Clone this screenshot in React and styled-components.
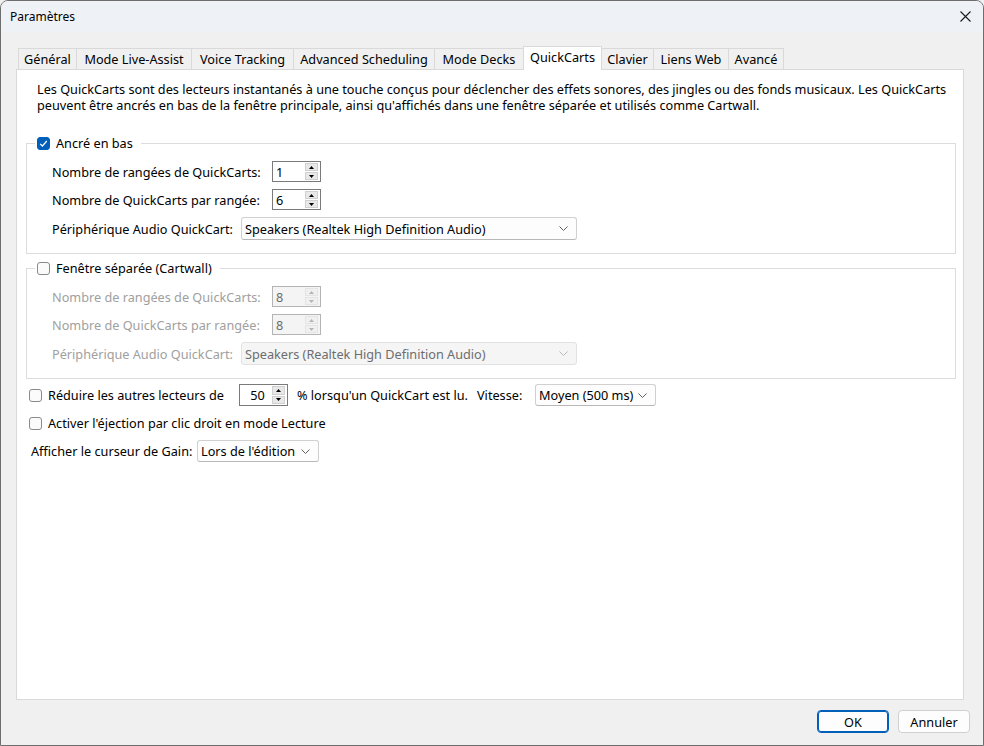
import React from "react";
import styled, { createGlobalStyle, css } from "styled-components";

const tabs = [
  ["Général", 59],
  ["Mode Live-Assist", 116],
  ["Voice Tracking", 103],
  ["Advanced Scheduling", 142],
  ["Mode Decks", 90],
  ["QuickCarts", 79],
  ["Clavier", 53],
  ["Liens Web", 76],
  ["Avancé", 56],
];

const colors = {
  text: "#000",
  disabled: "#a0a0a0",
  groupLine: "#dcdcdc",
  tabLine: "#d9d9d9",
  accent: "#005fb8",
};

function Check({ checked }) {
  return (
    <CheckBox checked={checked}>
      {checked && (
        <svg width="9" height="9" viewBox="0 0 9 9">
          <path d="M1.2 4.8 L3.4 7 L7.8 2" fill="none" stroke="#fff" strokeWidth="1.2" />
        </svg>
      )}
    </CheckBox>
  );
}

function Spinner({ value, disabled, h = 21, center }) {
  return (
    <SpinBox disabled={disabled} h={h}>
      <SpinValue center={center}>{value}</SpinValue>
      <SpinButtons>
        <SpinButton disabled={disabled}>
          <svg width="5" height="3" viewBox="0 0 5 3">
            <path d="M0 3 L2.5 0 L5 3 Z" fill={disabled ? "#b5b5b5" : "#000"} />
          </svg>
        </SpinButton>
        <SpinButton disabled={disabled}>
          <svg width="5" height="3" viewBox="0 0 5 3">
            <path d="M0 0 L2.5 3 L5 0 Z" fill={disabled ? "#b5b5b5" : "#000"} />
          </svg>
        </SpinButton>
      </SpinButtons>
    </SpinBox>
  );
}

function Combo({ value, width, h = 23, disabled }) {
  return (
    <ComboBox width={width} h={h} disabled={disabled}>
      <span>{value}</span>
      <svg width="9" height="5" viewBox="0 0 9 5">
        <path d="M0.5 0.5 L4.5 4.5 L8.5 0.5" fill="none" stroke={disabled ? "#b8b8b8" : "#606060"} strokeWidth="1" />
      </svg>
    </ComboBox>
  );
}

function QuickCartGroup({ title, checked, rows, cols, disabled, top }) {
  return (
    <Group top={top}>
      <Legend>
        <Check checked={checked} />
        <span>{title}</span>
      </Legend>
      <Row>
        <Label width={220} disabled={disabled}>Nombre de rangées de QuickCarts:</Label>
        <Spinner value={rows} disabled={disabled} />
      </Row>
      <Row>
        <Label width={220} disabled={disabled}>Nombre de QuickCarts par rangée:</Label>
        <Spinner value={cols} disabled={disabled} />
      </Row>
      <Row>
        <Label width={189} disabled={disabled}>Périphérique Audio QuickCart:</Label>
        <Combo value="Speakers (Realtek High Definition Audio)" width={336} disabled={disabled} />
      </Row>
    </Group>
  );
}

export default function App() {
  return (
    <>
      <GlobalStyle />
      <Window>
        <TitleBar>
          <Title>Paramètres</Title>
          <Close>
            <svg width="11" height="11" viewBox="0 0 11 11">
              <path d="M0.5 0.5 L10.5 10.5 M10.5 0.5 L0.5 10.5" stroke="#1a1a1a" strokeWidth="1.1" />
            </svg>
          </Close>
        </TitleBar>
        <Body>
          <TabStrip>
            {tabs.map(([name, w]) => (
              <Tab key={name} width={w} active={name === "QuickCarts"}>
                {name}
              </Tab>
            ))}
          </TabStrip>
          <Panel>
            <Description>
              <DescLine>
                Les QuickCarts sont des lecteurs instantanés à une touche conçus pour déclencher des effets sonores, des jingles ou des fonds musicaux. Les QuickCarts
              </DescLine>
              <DescLine>
                peuvent être ancrés en bas de la fenêtre principale, ainsi qu'affichés dans une fenêtre séparée et utilisés comme Cartwall.
              </DescLine>
            </Description>
            <QuickCartGroup title="Ancré en bas" checked rows="1" cols="6" top={22} />
            <QuickCartGroup title="Fenêtre séparée (Cartwall)" rows="8" cols="8" disabled top={6} />
            <Options>
              <Row>
                <Check />
                <Label width={191} gap={6}>Réduire les autres lecteurs de</Label>
                <Spinner value="50" h={22} center />
                <Label width={180} gap={9}>% lorsqu'un QuickCart est lu.</Label>
                <Label width={58}>Vitesse:</Label>
                <Combo value="Moyen (500 ms)" width={121} h={22} />
              </Row>
              <Row>
                <Check />
                <Label gap={6}>Activer l'éjection par clic droit en mode Lecture</Label>
              </Row>
              <Row>
                <Label width={166} gap={2}>Afficher le curseur de Gain:</Label>
                <Combo value="Lors de l'édition" width={122} h={22} />
              </Row>
            </Options>
          </Panel>
        </Body>
        <Footer>
          <Button primary>OK</Button>
          <Button>Annuler</Button>
        </Footer>
      </Window>
    </>
  );
}

const GlobalStyle = createGlobalStyle`
  html, body {
    margin: 0;
    padding: 0;
    background: #f0f0f0;
  }
  body {
    font-family: "Segoe UI", "Noto Sans", "Liberation Sans", sans-serif;
    font-size: 12.7px;
    line-height: 16px;
    color: #000;
  }
`;

const Window = styled.div`
  width: 984px;
  height: 746px;
  box-sizing: border-box;
  border: 1px solid #6e6e6e;
  border-radius: 8px 8px 0 0;
  background: #f0f0f0;
  display: flex;
  flex-direction: column;
  overflow: hidden;
`;

const TitleBar = styled.div`
  height: 31px;
  flex: none;
  display: flex;
  align-items: center;
  justify-content: space-between;
  padding: 0 10px 0 9px;
  background: #eef2f7;
`;

const Title = styled.div`
  font-size: 12px;
`;

const Close = styled.div`
  display: flex;
  width: 16px;
  justify-content: center;
`;

const Body = styled.div`
  flex: 1;
  display: flex;
  flex-direction: column;
  padding: 14px 19px 0 15px;
  min-height: 0;
`;

const TabStrip = styled.div`
  display: flex;
  align-items: flex-end;
  height: 23px;
  padding-left: 2px;
  position: relative;
  z-index: 1;
`;

const Tab = styled.div`
  width: ${(p) => p.width}px;
  box-sizing: border-box;
  margin-right: -1px;
  border: 1px solid ${colors.tabLine};
  border-bottom: none;
  display: flex;
  justify-content: center;
  align-items: center;
  white-space: nowrap;
  ${(p) =>
    p.active
      ? css`
          height: 24px;
          margin-bottom: -1px;
          background: #fff;
          padding-bottom: 3px;
          position: relative;
          z-index: 2;
        `
      : css`
          height: 21px;
          background: #f0f0f0;
        `}
`;

const Panel = styled.div`
  flex: 1;
  background: #fff;
  border: 1px solid ${colors.tabLine};
  padding: 11px 7px 0 9px;
  display: flex;
  flex-direction: column;
`;

const Description = styled.div`
  margin: 0 0 0 11px;
  display: flex;
  flex-direction: column;
`;

const DescLine = styled.div`
  height: 16px;
  line-height: 16px;
  white-space: nowrap;
`;

const Group = styled.fieldset`
  margin: ${(p) => p.top}px 0 0 0;
  padding: 10px 12px 13px 25px;
  border: 1px solid ${colors.groupLine};
  display: flex;
  flex-direction: column;
  gap: 7px;
  min-width: 0;
`;

const Legend = styled.legend`
  margin-left: -17px;
  padding: 0 8px 0 2px;
  display: flex;
  align-items: center;
  gap: 6px;
  height: 16px;
`;

const CheckBox = styled.span`
  width: 13px;
  height: 13px;
  box-sizing: border-box;
  border-radius: 3px;
  flex: none;
  display: inline-flex;
  align-items: center;
  justify-content: center;
  ${(p) =>
    p.checked
      ? css`
          background: ${colors.accent};
          border: 1px solid ${colors.accent};
        `
      : css`
          background: #fbfbfb;
          border: 1px solid #8a8a8a;
        `}
`;

const Row = styled.div`
  display: flex;
  align-items: center;
  min-height: 21px;
`;

const Label = styled.span`
  ${(p) => p.width && `width: ${p.width}px;`}
  flex: none;
  margin-left: ${(p) => p.gap || 0}px;
  white-space: nowrap;
  color: ${(p) => (p.disabled ? colors.disabled : colors.text)};
`;

const SpinBox = styled.div`
  width: 49px;
  height: ${(p) => p.h}px;
  box-sizing: border-box;
  flex: none;
  display: flex;
  align-items: stretch;
  padding: 1px 2px 1px 0;
  border: 1px solid ${(p) => (p.disabled ? "#b4b4b4" : "#7a7a7a")};
  background: ${(p) => (p.disabled ? "#f4f4f4" : "#fff")};
  color: ${(p) => (p.disabled ? "#6d6d6d" : colors.text)};
`;

const SpinValue = styled.div`
  flex: 1;
  display: flex;
  align-items: center;
  padding-left: 3px;
  ${(p) => p.center && "justify-content: center;"}
`;

const SpinButtons = styled.div`
  width: 13px;
  display: flex;
  flex-direction: column;
  gap: 1px;
`;

const SpinButton = styled.div`
  flex: 1;
  display: flex;
  align-items: center;
  justify-content: center;
  background: ${(p) => (p.disabled ? "#f0f0f0" : "#e8e8e8")};
  border: 1px solid ${(p) => (p.disabled ? "#e4e4e4" : "#d0d0d0")};
`;

const ComboBox = styled.div`
  width: ${(p) => p.width}px;
  height: ${(p) => p.h}px;
  box-sizing: border-box;
  flex: none;
  display: flex;
  align-items: center;
  justify-content: space-between;
  padding: 0 8px 0 3px;
  border: 1px solid ${(p) => (p.disabled ? "#e2e2e2" : "#d0d0d0")};
  border-bottom-color: ${(p) => (p.disabled ? "#e2e2e2" : "#b8b8b8")};
  border-radius: 3px;
  background: ${(p) => (p.disabled ? "#f5f5f5" : "#fdfdfd")};
  color: ${(p) => (p.disabled ? "#6d6d6d" : colors.text)};
  white-space: nowrap;
`;

const Options = styled.div`
  display: flex;
  flex-direction: column;
  gap: 6px;
  padding: 5px 0 0 3px;

  & > ${Row} {
    min-height: 22px;
  }
`;

const Footer = styled.div`
  height: 45px;
  flex: none;
  box-sizing: border-box;
  display: flex;
  justify-content: flex-end;
  align-items: flex-start;
  gap: 9px;
  padding: 10px 13px 0 0;
`;

const Button = styled.button`
  width: 72px;
  height: 23px;
  box-sizing: border-box;
  border-radius: 4px;
  font-family: inherit;
  font-size: 12.7px;
  color: #000;
  padding: 0;
  background: #fdfdfd;
  border: 1px solid ${(p) => (p.primary ? colors.accent : "#d0d0d0")};
  ${(p) => p.primary && css`box-shadow: inset 0 0 0 1px ${colors.accent};`}
`;
